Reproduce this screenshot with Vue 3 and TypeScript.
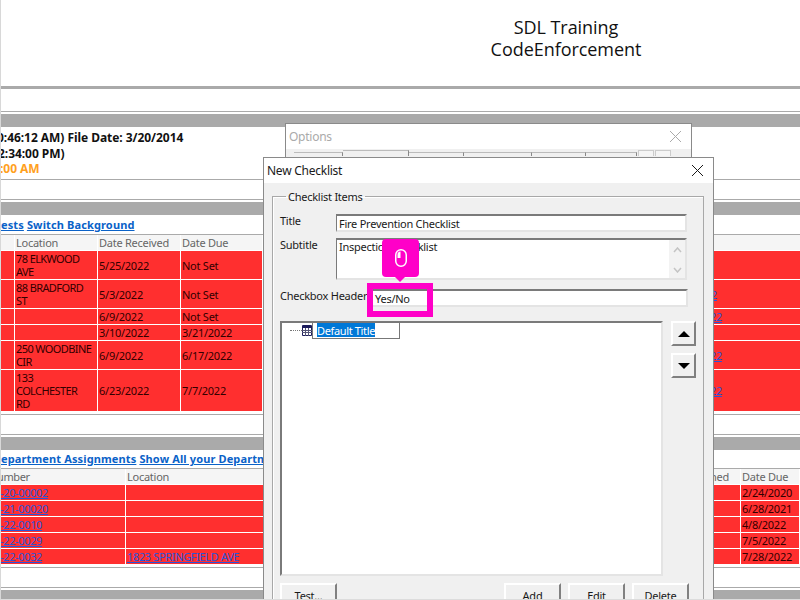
<script setup lang="ts">
interface CaseRow {
  location: string
  received: string
  due: string
  link?: string
  near?: boolean
}

const cases: CaseRow[] = [
  { location: '78 ELKWOOD AVE', received: '5/25/2022', due: 'Not Set' },
  { location: '88 BRADFORD ST', received: '5/3/2022', due: 'Not Set', link: '22', near: true },
  { location: '', received: '6/9/2022', due: 'Not Set', link: '22' },
  { location: '', received: '3/10/2022', due: '3/21/2022' },
  { location: '250 WOODBINE CIR', received: '6/9/2022', due: '6/17/2022', link: '22' },
  { location: '133 COLCHESTER RD', received: '6/23/2022', due: '7/7/2022', link: '22' },
]

const assignments = [
  { number: '-20-00002', location: '', due: '2/24/2020' },
  { number: '-21-00020', location: '', due: '6/28/2021' },
  { number: '-22-0010', location: '', due: '4/8/2022' },
  { number: '-22-0029', location: '', due: '7/5/2022' },
  { number: '-22-0032', location: '1823 SPRINGFIELD AVE', due: '7/28/2022' },
]

const optionTabs = [49, 66, 55, 68, 54, 51]
</script>

<template>
  <div class="screen">
    <header class="brand">
      <div>SDL Training</div>
      <div>CodeEnforcement</div>
    </header>

    <div class="band" />
    <div class="spacer first" />
    <div class="bar" />
    <section class="status">
      <div class="clip-a">0:46:12 AM) File Date: 3/20/2014</div>
      <div class="clip-b">2:34:00 PM)</div>
      <div class="orange">:00 AM</div>
    </section>
    <div class="spacer" />
    <div class="bar" />
    <nav class="links top-links">
      <a>ests</a>
      <a>Switch Background</a>
    </nav>

    <div class="cases">
      <div class="head" />
      <div class="head">Location</div>
      <div class="head">Date Received</div>
      <div class="head">Date Due</div>
      <div class="head" />
      <template v-for="(row, i) in cases" :key="i">
        <div class="cell" />
        <div class="cell wrap">{{ row.location }}</div>
        <div class="cell">{{ row.received }}</div>
        <div class="cell">{{ row.due }}</div>
        <div class="cell last" :class="{ near: row.near }"><a v-if="row.link">{{ row.link }}</a></div>
      </template>
    </div>

    <div class="spacer tail" />
    <div class="bar" />
    <nav class="links">
      <a>epartment Assignments</a>
      <a>Show All your Department Assignments</a>
    </nav>

    <div class="assign">
      <div class="head clipped">umber</div>
      <div class="head">Location</div>
      <div class="head assigned">Date Assigned</div>
      <div class="head">Date Due</div>
      <template v-for="row in assignments" :key="row.number">
        <div class="cell number"><a>{{ row.number }}</a></div>
        <div class="cell"><a v-if="row.location">{{ row.location }}</a></div>
        <div class="cell" />
        <div class="cell">{{ row.due }}</div>
      </template>
    </div>

    <div class="spacer tail" />
    <div class="bar" />

    <div class="window options">
      <div class="titlebar">
        <span>Options</span>
        <svg class="close" width="13" height="13" viewBox="0 0 13 13"><path d="M1 1l11 11M12 1L1 12" /></svg>
      </div>
      <div class="tabs">
        <span v-for="(w, i) in optionTabs" :key="i" class="tab" :class="{ active: i === 1 }" :style="{ width: w + 'px' }" />
        <span class="arrow" />
        <span class="arrow" />
      </div>
    </div>

    <div class="window checklist">
      <div class="titlebar">
        <span>New Checklist</span>
        <svg class="close" width="13" height="13" viewBox="0 0 13 13"><path d="M1 1l11 11M12 1L1 12" /></svg>
      </div>

      <fieldset class="group">
        <legend>Checklist Items</legend>
        <div class="field title-field">
          <label>Title</label>
          <div class="input">Fire Prevention Checklist</div>
        </div>
        <div class="field subtitle-field">
          <label>Subtitle</label>
          <div class="input area">
            <span>Inspection Checklist</span>
            <div class="scroll">
              <svg width="9" height="6" viewBox="0 0 9 6"><path d="M1 5l3.5-4L8 5" /></svg>
              <svg width="9" height="6" viewBox="0 0 9 6"><path d="M1 1l3.5 4L8 1" /></svg>
            </div>
          </div>
        </div>
        <div class="field header-field">
          <label>Checkbox Header</label>
          <div class="input">Yes/No</div>
        </div>

        <div class="tree-row">
          <div class="tree">
            <div class="node">
              <span class="dots" />
              <svg class="grid-icon" width="10" height="11" viewBox="0 0 10 11">
                <path d="M.5.5h9v10h-9z" fill="#fff" stroke="#1c1c5c" />
                <path d="M0 1h10v2H0z" fill="#1c1c5c" />
                <path d="M0 5.500h10M0 7.500h10M3.500 3v8M6.500 3v8" stroke="#555577" />
              </svg>
              <div class="edit"><span>Default Title</span></div>
            </div>
          </div>
          <div class="movers">
            <button class="mover"><i class="up" /></button>
            <button class="mover"><i class="down" /></button>
          </div>
        </div>

        <div class="actions">
          <button class="btn">Test...</button>
          <span class="grow" />
          <button class="btn">Add</button>
          <button class="btn">Edit</button>
          <button class="btn">Delete</button>
        </div>
      </fieldset>
    </div>

    <div class="highlight" />
    <div class="tip">
      <svg width="12" height="18" viewBox="0 0 12 18">
        <rect x=".75" y=".75" width="10.500" height="16.500" rx="5.250" fill="#ff00c8" stroke="#fff" stroke-width="1.500" />
        <path d="M5.500 2.500A3.200 3.200 0 0 0 2.500 5.700V9h3z" fill="#fff" />
      </svg>
    </div>
  </div>
</template>

<style scoped>
.screen {
  position: relative;
  width: 800px;
  height: 600px;
  box-sizing: border-box;
  overflow: hidden;
  background: #fff;
  border-left: 1px solid #d8d8d8;
  border-bottom: 1px solid #dcdcdc;
  font-family: "Noto Sans", sans-serif;
  font-size: 11px;
  letter-spacing: -0.25px;
  color: #1a1a1a;
}
.brand {
  height: 86px;
  box-sizing: border-box;
  padding: 16px 0 0 330px;
  width: 800px;
  text-align: center;
  font-family: "Open Sans", sans-serif;
  font-size: 18px;
  line-height: 22px;
  letter-spacing: -0.05px;
  color: #111;
}
.band { height: 3px; background: #aaa; }
.spacer { height: 19px; border-bottom: 1px solid #aaa; margin-bottom: 2px; border-top: 1px solid #aaa; }
.spacer.first { height: 22px; border-top: 0; }
.spacer.tail { height: 19px; margin-top: 3px; }
.bar { height: 13px; background: #aaa; }

.status {
  height: 52px;
  box-sizing: border-box;
  padding-top: 3px;
  font-size: 12px;
  line-height: 15.500px;
  font-weight: 700;
  letter-spacing: -0.05px;
  color: #111;
  overflow: hidden;
}
.clip-a { margin-left: -4px; }
.clip-b { margin-left: -3px; }
.orange { color: #ffa020; margin-left: -1px; }

.links {
  height: 19px;
  box-sizing: border-box;
  border-bottom: 1px solid #aaa;
  font-size: 11px;
  line-height: 18px;
  font-weight: 700;
  letter-spacing: 0.13px;
  white-space: nowrap;
  overflow: hidden;
}
.top-links { height: 20px; line-height: 20px; }
.links a { color: #0a62c8; text-decoration: underline; margin-right: 3px; }

.cases, .assign {
  display: grid;
  gap: 1px;
  background: #fff;
  line-height: 13px;
}
.cases { grid-template-columns: 13px 82px 82px 81px 1fr; }
.assign { grid-template-columns: 124px 528px 85px 58px; }

.head {
  height: 15px;
  padding: 1px 1px 0;
  box-sizing: border-box;
  background: #f5f5f5;
  color: #666;
  white-space: nowrap;
  overflow: hidden;
}
.clipped { text-indent: -5px; letter-spacing: -0.4px; }
.assigned { padding-left: 3px; }
.cell {
  min-height: 15px;
  padding: 1px 1px;
  box-sizing: border-box;
  background: #ff2f2f;
  color: #300;
  display: flex;
  align-items: center;
}
.cell.wrap { letter-spacing: -0.6px; padding-right: 4px; }
.cell a { color: #2a55d8; text-decoration: underline; letter-spacing: -0.35px; }
.cell.number a { margin-left: -2px; }
.cell.last { padding-left: 447px; }
.cell.last.near { padding-left: 442px; }

.window {
  position: absolute;
  background: #f0f0f0;
  border: 1px solid #8a8a8a;
  box-sizing: border-box;
}
.options { left: 284px; top: 123px; width: 407px; height: 120px; color: #aaa; }
.checklist { left: 262px; top: 157px; width: 451px; height: 450px; }
.titlebar {
  height: 25px;
  background: #fff;
  display: flex;
  align-items: center;
  justify-content: space-between;
  padding: 0 9px 0 3px;
  font-size: 12px;
}
.close path { fill: none; stroke: currentColor; stroke-width: 1; }

.tabs {
  display: flex;
  align-items: flex-end;
  height: 7px;
  padding: 0 4px 0 8px;
}
.tab { height: 4px; border-top: 1px solid #bbb; border-right: 1px solid #888; box-sizing: border-box; }
.tab.active { height: 6px; }
.arrow { width: 16px; height: 6px; margin-left: 1px; border: 1px solid #ccc; border-bottom: 0; background: #f5f5f5; box-sizing: border-box; }
.tabs .arrow:first-of-type { margin-left: auto; }

.group {
  margin: 7px 9px 0 8px;
  padding: 0 6px 0 7px;
  border: 1px solid #a8a8a8;
  box-shadow: inset 1px 1px 0 #fff;
  min-width: 0;
}
.group legend { padding: 0 2px; margin-left: 6px; line-height: 13px; font-size: 11px; }
.field { display: flex; }
.field label { flex: 0 0 auto; }
.input {
  box-sizing: border-box;
  background: #fff;
  border: 2px solid;
  border-color: #7a7a7a #e4e4e4 #e4e4e4 #7a7a7a;
  border-width: 2px 2px 2px 1px;
  padding: 0 2px;
  line-height: 14px;
  font-size: 11px;
}
.title-field { margin-top: 11px; height: 24px; }
.title-field label { width: 56px; line-height: 14px; }
.title-field .input { width: 351px; height: 18px; padding-top: 1px; }
.subtitle-field { height: 51px; }
.subtitle-field label { width: 56px; line-height: 14px; }
.area { width: 351px; height: 42px; display: flex; justify-content: space-between; }
.scroll {
  width: 16px;
  margin-right: -2px;
  display: flex;
  flex-direction: column;
  justify-content: space-between;
  align-items: center;
  padding: 7px 0 5px;
  background: #f3f3f3;
}
.scroll path { fill: none; stroke: #c4c4c4; stroke-width: 1.500; }
.header-field { height: 32px; }
.header-field label { width: 92px; line-height: 14px; }
.header-field .input { width: 316px; height: 18px; padding-top: 1px; }

.tree-row { display: flex; gap: 8px; }
.tree {
  flex: none;
  width: 383px;
  height: 255px;
  box-sizing: border-box;
  background: #fff;
  border: 2px solid;
  border-color: #7a7a7a #e4e4e4 #e4e4e4 #7a7a7a;
  position: relative;
}
.node { display: flex; align-items: center; height: 17px; margin-top: -1px; padding-left: 8px; }
.dots { width: 12px; border-top: 1px dotted #777; }
.grid-icon { flex: none; }
.edit {
  width: 88px;
  height: 17px;
  box-sizing: border-box;
  border: 1px solid #777;
  background: #fff;
  padding-left: 4px;
  line-height: 15px;
  letter-spacing: -0.35px;
  white-space: nowrap;
}
.edit span { background: #0078d7; color: #fff; display: inline-block; height: 14px; }
.movers { display: flex; flex-direction: column; gap: 7px; }
.mover {
  width: 25px;
  height: 25px;
  padding: 0;
  background: #f0f0f0;
  border: 2px solid;
  border-color: #fff #808080 #808080 #fff;
  display: flex;
  align-items: center;
  justify-content: center;
}
.up, .down { width: 0; height: 0; border-left: 6px solid transparent; border-right: 6px solid transparent; }
.up { border-bottom: 6px solid #000; }
.down { border-top: 6px solid #000; }

.actions { display: flex; gap: 7px; margin: 7px 8px 0 0; }
.grow { flex: 1; }
.btn {
  width: 57px;
  height: 24px;
  padding: 0;
  background: #f0f0f0;
  border: 2px solid;
  border-color: #fff #808080 #808080 #fff;
  font: 11px "Noto Sans", sans-serif;
  letter-spacing: -0.25px;
  color: #1a1a1a;
}

.highlight {
  position: absolute;
  left: 366px;
  top: 283px;
  width: 66px;
  height: 34px;
  box-sizing: border-box;
  border: 6px solid #ff00c8;
  pointer-events: none;
}
.tip {
  position: absolute;
  left: 381px;
  top: 239px;
  width: 37px;
  height: 38px;
  border-radius: 4px;
  background: #ff00c8;
  display: flex;
  align-items: center;
  justify-content: center;
}
.tip::after {
  content: "";
  position: absolute;
  left: 13px;
  top: 38px;
  border: 5px solid transparent;
  border-top-color: #ff00c8;
  border-bottom: 0;
}
</style>

<style>
html, body { margin: 0; overflow: hidden; }
</style>
